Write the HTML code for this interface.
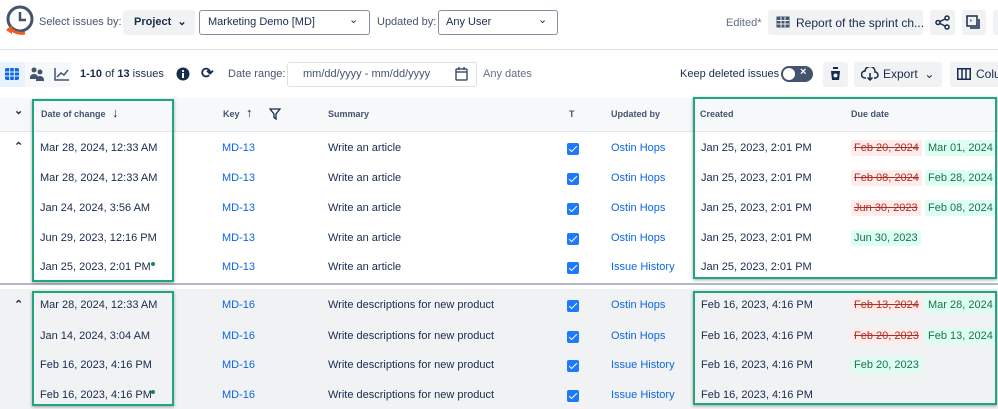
<!DOCTYPE html>
<html><head><style>
*{box-sizing:border-box;margin:0;padding:0}
body{width:998px;height:409px;overflow:hidden;background:#fff;font-family:"Liberation Sans",sans-serif;font-size:11px;color:#172b4d;position:relative}
.a{position:absolute;white-space:nowrap}
.btn{position:absolute;background:#f1f2f4;border-radius:3px}
.dd{position:absolute;border:1px solid #8590a2;border-radius:3px;background:#fff}
.row{position:absolute;left:0;width:998px}
.lnk{color:#0c66e4}
.cb{position:absolute;width:12px;height:12px;background:#1d7afc;border-radius:2px}
.cb:after{content:"";position:absolute;left:4px;top:1px;width:3px;height:7px;border:solid #fff;border-width:0 1.5px 1.5px 0;transform:rotate(45deg)}
.old{position:absolute;white-space:nowrap;background:#ffeceb;color:#ae2e24;text-decoration:line-through;padding:2px 3px;border-radius:2px}
.new{position:absolute;white-space:nowrap;background:#dcfff1;color:#216e4e;padding:2px 3px;border-radius:2px}
.box{position:absolute;border:2px solid #1fa67f;box-shadow:0 1px 3px rgba(0,0,0,.35)}
.hd{font-weight:bold;font-size:9px;color:#44546f}
</style></head><body>
<svg class="a" style="left:3px;top:4px" width="34" height="36" viewBox="0 0 34 36"><circle cx="17" cy="15" r="12" fill="none" stroke="#44546f" stroke-width="3"/><path d="M17 8v8h6" fill="none" stroke="#44546f" stroke-width="2.5"/><path d="M8 25a13 10 0 0 0 14 4" fill="none" stroke="#f15a24" stroke-width="3"/><path d="M3 26l6 -5v9z" fill="#f15a24"/></svg>
<div class="a" style="left:39px;top:16px;color:#44546f">Select issues by:</div>
<div class="btn" style="left:123px;top:10px;width:72px;height:25px"></div>
<div class="a" style="left:134px;top:15px;font-weight:bold">Project &nbsp;⌄</div>
<div class="dd" style="left:199px;top:10px;width:171px;height:25px"></div>
<div class="a" style="left:208px;top:16px">Marketing Demo [MD]</div><div class="a" style="left:349px;top:13px;font-size:11px">⌄</div>
<div class="a" style="left:377px;top:16px;color:#44546f">Updated by:</div>
<div class="dd" style="left:438px;top:10px;width:120px;height:25px"></div>
<div class="a" style="left:446px;top:16px">Any User</div><div class="a" style="left:538px;top:13px;font-size:11px">⌄</div>
<div class="a" style="left:726px;top:17px;color:#626f86">Edited*</div>
<div class="btn" style="left:768px;top:10px;width:155px;height:25px"></div>
<svg class="a" style="left:776px;top:16px" width="14" height="12"><rect x="0.5" y="0.5" width="13" height="11" fill="#44546f"/><path d="M1 4.5h12M1 8h12M5 1v10M9 1v10" stroke="#f1f2f4"/></svg>
<div class="a" style="left:796px;top:16px;font-size:12px">Report of the sprint ch...</div>
<div class="btn" style="left:930px;top:10px;width:25px;height:25px"></div>
<svg class="a" style="left:935px;top:15px" width="15" height="15"><circle cx="12" cy="3" r="2" fill="none" stroke="#172b4d" stroke-width="1.5"/><circle cx="3" cy="7.5" r="2" fill="none" stroke="#172b4d" stroke-width="1.5"/><circle cx="12" cy="12" r="2" fill="none" stroke="#172b4d" stroke-width="1.5"/><path d="M5 6.5l5-2.5M5 8.5l5 2.5" stroke="#172b4d" stroke-width="1.5"/></svg>
<div class="btn" style="left:962px;top:10px;width:24px;height:25px"></div>
<svg class="a" style="left:966px;top:15px" width="15" height="15"><rect x="1" y="1" width="10" height="10" fill="none" stroke="#172b4d" stroke-width="1.5"/><path d="M4 13h9V4" fill="none" stroke="#172b4d" stroke-width="1.5"/><text x="3.5" y="9" font-size="7" fill="#172b4d">*</text></svg>
<div class="btn" style="left:993px;top:10px;width:10px;height:25px"></div>
<div class="a" style="left:0;top:49px;width:998px;height:1px;background:#dcdfe4"></div>
<div class="a" style="left:0;top:62px;width:71px;height:25px;background:#f7f8f9"></div>
<div class="a" style="left:0;top:62px;width:25px;height:25px;background:#e9f2ff"></div>
<svg class="a" style="left:5px;top:68px" width="14" height="12"><rect width="14" height="12" rx="2" fill="#0c66e4"/><path d="M0 4h14M0 8h14M4.7 0v12M9.3 0v12" stroke="#e9f2ff"/></svg>
<svg class="a" style="left:30px;top:67px" width="15" height="14"><circle cx="4" cy="3" r="2.5" fill="#44546f"/><circle cx="10" cy="5" r="2.5" fill="#44546f"/><path d="M0 10a4 3 0 0 1 8 0v2H0zM6 13a4 4 0 0 1 8 0v1H6z" fill="#44546f"/></svg>
<svg class="a" style="left:54px;top:67px" width="16" height="14"><path d="M1 1v12h14" fill="none" stroke="#44546f" stroke-width="1.5"/><path d="M3 10l4-4 3 2 4-5" fill="none" stroke="#44546f" stroke-width="1.5"/></svg>
<div class="a" style="left:80px;top:68px"><b>1-10</b> of <b>13</b> issues</div>
<svg class="a" style="left:176px;top:67px" width="14" height="14"><circle cx="7" cy="7" r="6.5" fill="#172b4d"/><rect x="6" y="6" width="2" height="5" fill="#fff"/><circle cx="7" cy="4" r="1.1" fill="#fff"/></svg>
<div class="a" style="left:201px;top:64px;font-size:15px;font-weight:bold">⟳</div>
<div class="a" style="left:228px;top:68px;color:#44546f">Date range:</div>
<div class="dd" style="left:287px;top:62px;width:190px;height:25px;border-color:#dcdfe4"></div>
<div class="a" style="left:303px;top:68px;color:#44546f">mm/dd/yyyy - mm/dd/yyyy</div>
<svg class="a" style="left:455px;top:67px" width="13" height="14"><rect x="1" y="2" width="11" height="11" rx="1" fill="none" stroke="#44546f" stroke-width="1.5"/><path d="M1 5h11M4 0v3M9 0v3" stroke="#44546f" stroke-width="1.5"/></svg>
<div class="a" style="left:483px;top:68px;color:#626f86">Any dates</div>
<div class="a" style="left:680px;top:68px">Keep deleted issues</div>
<div class="a" style="left:781px;top:66px;width:32px;height:16px;background:#44546f;border-radius:8px"></div>
<div class="a" style="left:783px;top:68px;width:12px;height:12px;background:#fff;border-radius:6px"></div>
<div class="a" style="left:800px;top:66px;color:#fff;font-size:11px;font-weight:bold">×</div>
<div class="btn" style="left:823px;top:62px;width:25px;height:25px"></div>
<svg class="a" style="left:829px;top:67px" width="13" height="14"><path d="M1 2h11M4 2V0h5v2M2 4h9l-1 9H3z" fill="#172b4d"/><circle cx="6.5" cy="8.5" r="2" fill="#f1f2f4"/></svg>
<div class="btn" style="left:854px;top:62px;width:88px;height:25px"></div>
<svg class="a" style="left:861px;top:67px" width="18" height="14"><path d="M5 11H4a3.5 3.5 0 0 1 0-7 5 5 0 0 1 10 1 3 3 0 0 1 0 6h-1M9 6v7M6.5 10.5L9 13l2.5-2.5" fill="none" stroke="#172b4d" stroke-width="1.5"/></svg>
<div class="a" style="left:883px;top:67px;font-size:12px">Export &nbsp;⌄</div>
<div class="btn" style="left:950px;top:62px;width:50px;height:25px"></div>
<svg class="a" style="left:957px;top:68px" width="14" height="12"><rect x="0.75" y="0.75" width="12.5" height="10.5" fill="none" stroke="#172b4d" stroke-width="1.5"/><path d="M5 1v10M9 1v10" stroke="#172b4d" stroke-width="1.5"/></svg>
<div class="a" style="left:976px;top:67px;font-size:12px">Colu</div>
<div class="row" style="top:98px;height:33px;background:#f7f8f9"></div>
<div class="a" style="left:14px;top:104px;font-size:11px;font-weight:bold">⌄</div>
<div class="a hd" style="left:41px;top:109px">Date of change</div>
<div class="a" style="left:112px;top:105px;font-size:13px;font-weight:bold">↓</div>
<div class="a hd" style="left:223px;top:109px">Key</div>
<div class="a" style="left:246px;top:105px;font-size:13px;font-weight:bold">↑</div>
<svg class="a" style="left:269px;top:108px" width="12" height="12"><path d="M1 1h10L7 6v5L5 9.5V6z" fill="none" stroke="#172b4d" stroke-width="1.3"/></svg>
<div class="a hd" style="left:328px;top:109px">Summary</div>
<div class="a hd" style="left:569px;top:109px">T</div>
<div class="a hd" style="left:611px;top:109px">Updated by</div>
<div class="a hd" style="left:700px;top:109px">Created</div>
<div class="a hd" style="left:851px;top:109px">Due date</div>
<div class="row" style="top:131px;height:1px;background:#e4e6ea"></div>
<div class="row" style="top:283px;height:2px;background:#b3b9c4"></div>
<div class="row" style="top:289px;height:120px;background:#f1f2f4"></div>
<div class="a" style="left:14px;top:140px;font-size:11px;font-weight:bold">⌃</div>
<div class="a" style="left:14px;top:298px;font-size:11px;font-weight:bold">⌃</div>
<div class="a" style="left:40px;top:142px">Mar 28, 2024, 12:33 AM</div>
<div class="a" style="left:40px;top:172px">Mar 28, 2024, 12:33 AM</div>
<div class="a" style="left:40px;top:202px">Jan 24, 2024, 3:56 AM</div>
<div class="a" style="left:40px;top:232px">Jun 29, 2023, 12:16 PM</div>
<div class="a" style="left:40px;top:261px">Jan 25, 2023, 2:01 PM</div>
<div class="a" style="left:151px;top:262px;width:4px;height:4px;border-radius:2px;background:#1f845a"></div>
<div class="a" style="left:40px;top:299px">Mar 28, 2024, 12:33 AM</div>
<div class="a" style="left:40px;top:330px">Jan 14, 2024, 3:04 AM</div>
<div class="a" style="left:40px;top:359px">Feb 16, 2023, 4:16 PM</div>
<div class="a" style="left:40px;top:389px">Feb 16, 2023, 4:16 PM</div>
<div class="a" style="left:151px;top:390px;width:4px;height:4px;border-radius:2px;background:#1f845a"></div>

<div class="a lnk" style="left:222px;top:142px">MD-13</div>
<div class="a lnk" style="left:222px;top:172px">MD-13</div>
<div class="a lnk" style="left:222px;top:202px">MD-13</div>
<div class="a lnk" style="left:222px;top:232px">MD-13</div>
<div class="a lnk" style="left:222px;top:261px">MD-13</div>
<div class="a lnk" style="left:222px;top:299px">MD-16</div>
<div class="a lnk" style="left:222px;top:330px">MD-16</div>
<div class="a lnk" style="left:222px;top:359px">MD-16</div>
<div class="a lnk" style="left:222px;top:389px">MD-16</div>

<div class="a" style="left:328px;top:142px">Write an article</div>
<div class="a" style="left:328px;top:172px">Write an article</div>
<div class="a" style="left:328px;top:202px">Write an article</div>
<div class="a" style="left:328px;top:232px">Write an article</div>
<div class="a" style="left:328px;top:261px">Write an article</div>
<div class="a" style="left:328px;top:299px">Write descriptions for new product</div>
<div class="a" style="left:328px;top:330px">Write descriptions for new product</div>
<div class="a" style="left:328px;top:359px">Write descriptions for new product</div>
<div class="a" style="left:328px;top:389px">Write descriptions for new product</div>

<div class="cb" style="left:567px;top:143px"></div>
<div class="cb" style="left:567px;top:173px"></div>
<div class="cb" style="left:567px;top:203px"></div>
<div class="cb" style="left:567px;top:233px"></div>
<div class="cb" style="left:567px;top:262px"></div>
<div class="cb" style="left:567px;top:300px"></div>
<div class="cb" style="left:567px;top:331px"></div>
<div class="cb" style="left:567px;top:360px"></div>
<div class="cb" style="left:567px;top:390px"></div>

<div class="a lnk" style="left:611px;top:142px">Ostin Hops</div>
<div class="a lnk" style="left:611px;top:172px">Ostin Hops</div>
<div class="a lnk" style="left:611px;top:202px">Ostin Hops</div>
<div class="a lnk" style="left:611px;top:232px">Ostin Hops</div>
<div class="a lnk" style="left:611px;top:261px">Issue History</div>
<div class="a lnk" style="left:611px;top:299px">Ostin Hops</div>
<div class="a lnk" style="left:611px;top:330px">Ostin Hops</div>
<div class="a lnk" style="left:611px;top:359px">Issue History</div>
<div class="a lnk" style="left:611px;top:389px">Issue History</div>

<div class="a" style="left:701px;top:142px">Jan 25, 2023, 2:01 PM</div>
<div class="a" style="left:701px;top:172px">Jan 25, 2023, 2:01 PM</div>
<div class="a" style="left:701px;top:202px">Jan 25, 2023, 2:01 PM</div>
<div class="a" style="left:701px;top:232px">Jan 25, 2023, 2:01 PM</div>
<div class="a" style="left:701px;top:261px">Jan 25, 2023, 2:01 PM</div>
<div class="a" style="left:701px;top:299px">Feb 16, 2023, 4:16 PM</div>
<div class="a" style="left:701px;top:330px">Feb 16, 2023, 4:16 PM</div>
<div class="a" style="left:701px;top:359px">Feb 16, 2023, 4:16 PM</div>
<div class="a" style="left:701px;top:389px">Feb 16, 2023, 4:16 PM</div>

<div class="old" style="left:851px;top:140px">Feb 20, 2024</div><div class="new" style="left:925px;top:140px">Mar 01, 2024</div>
<div class="old" style="left:851px;top:170px">Feb 08, 2024</div><div class="new" style="left:925px;top:170px">Feb 28, 2024</div>
<div class="old" style="left:851px;top:200px">Jun 30, 2023</div><div class="new" style="left:925px;top:200px">Feb 08, 2024</div>
<div class="new" style="left:851px;top:230px">Jun 30, 2023</div>
<div class="old" style="left:851px;top:297px">Feb 13, 2024</div><div class="new" style="left:925px;top:297px">Mar 28, 2024</div>
<div class="old" style="left:851px;top:328px">Feb 20, 2023</div><div class="new" style="left:925px;top:328px">Feb 13, 2024</div>
<div class="new" style="left:851px;top:357px">Feb 20, 2023</div>

<div class="box" style="left:32px;top:99px;width:142px;height:183px"></div>
<div class="box" style="left:32px;top:291px;width:142px;height:115px"></div>
<div class="box" style="left:693px;top:97px;width:304px;height:182px"></div>
<div class="box" style="left:693px;top:291px;width:304px;height:114px"></div>
</body></html>
